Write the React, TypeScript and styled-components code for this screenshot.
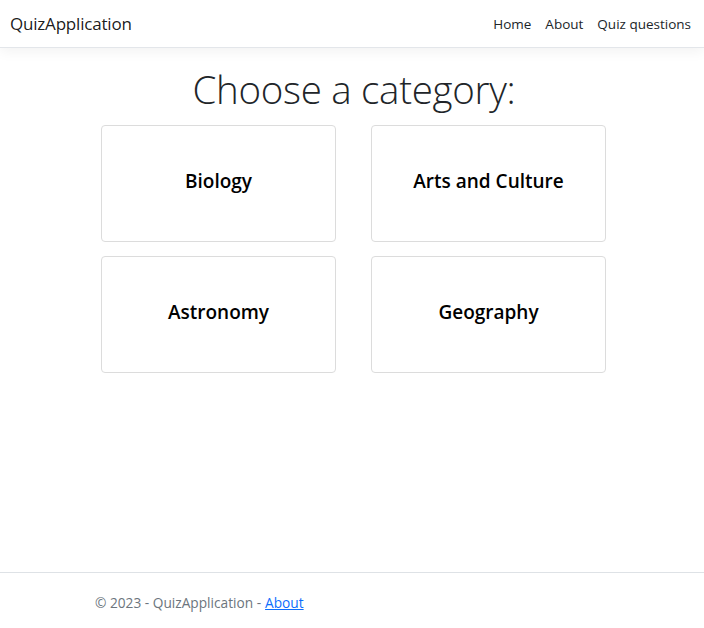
import React from "react";
import styled, { createGlobalStyle } from "styled-components";

const GlobalStyle = createGlobalStyle`
  html, body { margin: 0; padding: 0; }
  body {
    font-family: "Open Sans", "Noto Sans", "Liberation Sans", sans-serif;
    color: #212529;
    background: #fff;
  }
  #root { min-height: 100vh; }
  * { box-sizing: border-box; }
`;

const Page = styled.div`
  min-height: 100vh;
  display: flex;
  flex-direction: column;
`;

const Navbar = styled.header`
  height: 48px;
  display: flex;
  align-items: center;
  justify-content: space-between;
  padding: 0 13px 0 10px;
  border-bottom: 1px solid #e3e6ea;
  box-shadow: 0 4px 12px rgba(0, 0, 0, 0.05);
`;

const Brand = styled.a`
  font-size: 17px;
  color: rgba(0, 0, 0, 0.9);
  text-decoration: none;
  letter-spacing: -0.2px;
`;

const NavList = styled.nav`
  display: flex;
  gap: 14px;
`;

const NavLink = styled.a`
  font-size: 13.5px;
  color: #212529;
  text-decoration: none;
`;

const Main = styled.main`
  display: flex;
  flex-direction: column;
  align-items: center;
  padding-top: 18px;
`;

const Title = styled.h1`
  margin: 0 0 13px 4px;
  font-size: 38.5px;
  font-weight: 300;
  line-height: 1.2;
  letter-spacing: -0.3px;
`;

const Grid = styled.div`
  display: grid;
  grid-template-columns: repeat(2, 235px);
  column-gap: 35px;
  row-gap: 14px;
  margin-left: 3px;
`;

const Card = styled.a`
  height: 117px;
  border: 1px solid #dcdcdc;
  border-radius: 4px;
  display: flex;
  align-items: center;
  justify-content: center;
  color: #000;
  text-decoration: none;
  font-size: 19px;
  font-weight: 600;
  padding-bottom: 5px;
`;

const Footer = styled.footer`
  margin-top: auto;
  height: 56px;
  border-top: 1px solid #dee2e6;
  display: flex;
  align-items: center;
  padding: 4px 0 0 95px;
  font-size: 13.7px;
  color: #6c757d;
`;

const FooterLink = styled.a`
  color: #0d6efd;
  text-decoration: underline;
  margin-left: 4px;
`;

const categories = ["Biology", "Arts and Culture", "Astronomy", "Geography"];

export default function App() {
  return (
    <Page>
      <GlobalStyle />
      <Navbar>
        <Brand href="#">QuizApplication</Brand>
        <NavList>
          <NavLink href="#">Home</NavLink>
          <NavLink href="#">About</NavLink>
          <NavLink href="#">Quiz questions</NavLink>
        </NavList>
      </Navbar>
      <Main>
        <Title>Choose a category:</Title>
        <Grid>
          {categories.map((c) => (
            <Card key={c} href="#">
              {c}
            </Card>
          ))}
        </Grid>
      </Main>
      <Footer>
        © 2023 - QuizApplication -<FooterLink href="#">About</FooterLink>
      </Footer>
    </Page>
  );
}
